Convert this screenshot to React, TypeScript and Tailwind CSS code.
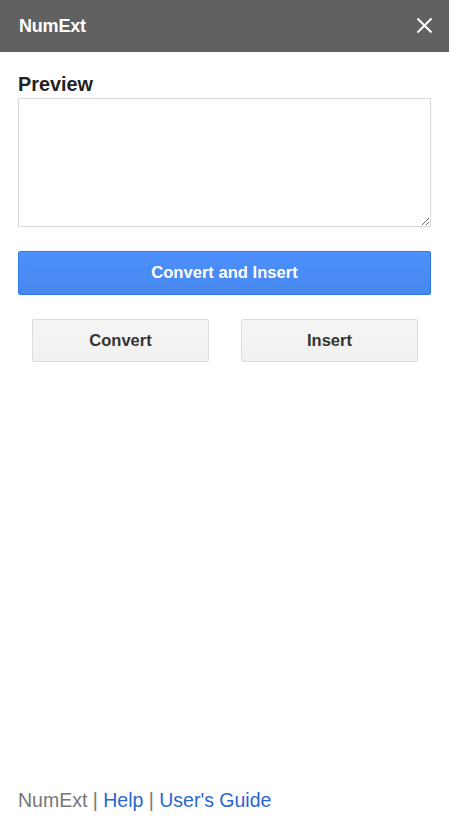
import { X } from 'lucide-react';

const App = () => {
  return (
    <div className="flex h-[831px] w-[449px] flex-col bg-white font-['Liberation_Sans',Arial,sans-serif]">
      {/* Header */}
      <div className="flex h-[52px] shrink-0 items-center justify-between bg-[#616161] pl-[19px] pr-[16px]">
        <span className="text-[18px] font-bold tracking-[-0.2px] text-white">NumExt</span>
        <svg width="17" height="17" viewBox="0 0 17 17" className="mt-[-1px]">
          <path d="M1.5 1.5 L15.5 15.5 M15.5 1.5 L1.5 15.5" stroke="white" strokeWidth="2" />
        </svg>
      </div>

      {/* Body */}
      <div className="flex flex-1 flex-col px-[18px]">
        <div className="mt-[20px] text-[19.8px] font-bold leading-[24px] text-[#222]">Preview</div>
        <textarea className="mt-[2px] h-[129px] w-full resize-y rounded-none border border-[#d9d9d9] p-1 outline-none" />

        <button className="mt-[24px] h-[44px] w-full rounded-[2px] border border-[#3079ed] bg-gradient-to-b from-[#4d90fe] to-[#4787ed] text-[16.6px] font-bold text-white">
          Convert and Insert
        </button>

        <div className="mt-[24px] flex justify-between pl-[14px] pr-[13px]">
          <button className="h-[43px] w-[177px] rounded-[2px] border border-[#dcdcdc] bg-gradient-to-b from-[#f5f5f5] to-[#f1f1f1] text-[16.5px] font-bold text-[#333]">
            Convert
          </button>
          <button className="h-[43px] w-[177px] rounded-[2px] border border-[#dcdcdc] bg-gradient-to-b from-[#f5f5f5] to-[#f1f1f1] text-[16.5px] font-bold text-[#333]">
            Insert
          </button>
        </div>

        {/* Footer */}
        <div className="mt-auto mb-[19px] text-[19.5px] leading-[24px] text-[#777]">
          NumExt | <span className="text-[#2a66d4]">Help</span> | <span className="text-[#2a66d4]">User's Guide</span>
        </div>
      </div>
    </div>
  );
};

export default App;
